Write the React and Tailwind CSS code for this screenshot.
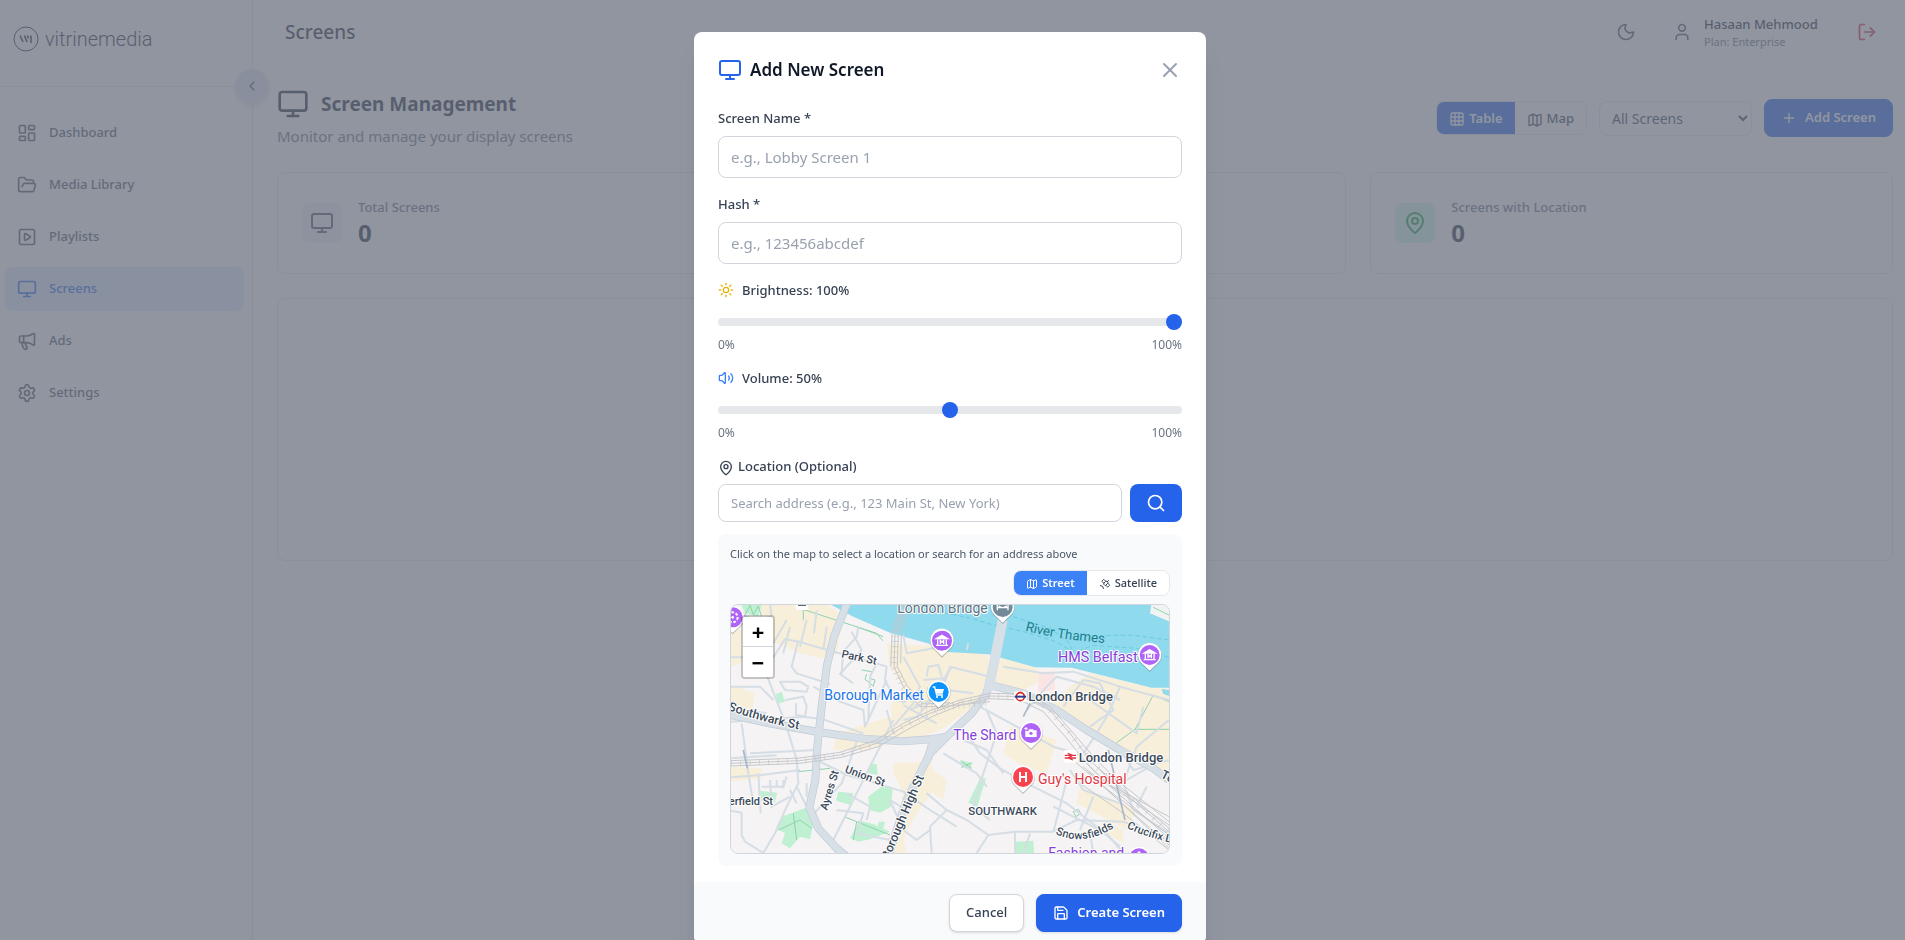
import { useState } from 'react';
import {
  ChevronLeft,
  FolderOpen,
  Grid3x3,
  LayoutDashboard,
  LogOut,
  Map as MapIcon,
  MapPin,
  Megaphone,
  Monitor,
  Moon,
  Plus,
  Save,
  Satellite,
  Search,
  Settings,
  SquarePlay,
  Sun,
  User,
  Volume2,
  X,
} from 'lucide-react';

const NAV = [
  { label: 'Dashboard', icon: LayoutDashboard },
  { label: 'Media Library', icon: FolderOpen },
  { label: 'Playlists', icon: SquarePlay },
  { label: 'Screens', icon: Monitor, active: true },
  { label: 'Ads', icon: Megaphone },
  { label: 'Settings', icon: Settings },
];

function Logo() {
  return (
    <div className="flex items-center gap-[6px] text-gray-800">
      <svg width="26" height="26" viewBox="0 0 26 26" fill="none" stroke="currentColor">
        <circle cx="13" cy="13" r="12" strokeWidth="1" />
        <path d="M7 9.5l3 6.5M11.5 9.5l2.5 6.5M14.5 9.5l1 3M18 9.5V17" strokeWidth="1.6" />
      </svg>
      <span className="font-[Roboto] text-[20px] leading-7 font-light">vitrinemedia</span>
    </div>
  );
}

function Sidebar() {
  return (
    <aside className="relative w-[253px] shrink-0 border-r border-gray-200 bg-white">
      <div className="flex h-[87px] items-center border-b border-gray-200 px-[13px] pb-2">
        <Logo />
      </div>
      <button
        aria-label="Collapse sidebar"
        className="absolute -right-[17px] top-[69px] flex size-[34px] items-center justify-center rounded-full border border-gray-200 bg-slate-200 text-gray-600 shadow-md"
      >
        <ChevronLeft size={16} />
      </button>
      <nav className="flex flex-col gap-2 pt-6 pr-2 pl-[5px]">
        {NAV.map(({ label, icon: Icon, active }) => (
          <a
            key={label}
            href="#"
            className={`flex h-11 items-center gap-3 rounded-lg px-3 text-[13px] font-medium ${
              active ? 'bg-[#e3f0fe] text-[#2563eb]' : 'text-gray-600'
            }`}
          >
            <Icon size={20} />
            {label}
          </a>
        ))}
      </nav>
    </aside>
  );
}

function Header() {
  return (
    <header className="flex h-16 items-center justify-between pr-7 pl-8">
      <h1 className="text-[19px] font-medium text-gray-800">Screens</h1>
      <div className="flex items-center">
        <button aria-label="Dark mode" className="mr-9 text-gray-600">
          <Moon size={20} />
        </button>
        <User size={20} className="mr-3 text-gray-600" />
        <div className="mr-9 min-w-[117px]">
          <p className="text-[13px] leading-5 font-medium text-gray-800">Hasaan Mehmood</p>
          <p className="text-[11px] leading-4 text-gray-500">Plan: Enterprise</p>
        </div>
        <button aria-label="Log out" className="text-[#dc2626]">
          <LogOut size={20} />
        </button>
      </div>
    </header>
  );
}

function StatCard({ label, value, icon: Icon, tone }) {
  return (
    <div className="flex items-center gap-4 rounded-lg border border-gray-200 bg-white p-6">
      <div className={`rounded-lg p-2 ${tone}`}>
        <Icon size={24} />
      </div>
      <div>
        <p className="text-[13px] leading-5 font-medium text-gray-500">{label}</p>
        <p className="text-2xl font-bold text-gray-800">{value}</p>
      </div>
    </div>
  );
}

function ScreensPage() {
  return (
    <main className="flex-1 pt-6 pr-3 pb-6 pl-6">
      <div className="flex items-center justify-between">
        <div>
          <h2 className="flex items-center gap-3 text-[19px] leading-8 font-bold text-gray-800">
            <Monitor size={32} />
            Screen Management
          </h2>
          <p className="mt-1 text-[15px] leading-6 text-gray-500">Monitor and manage your display screens</p>
        </div>
        <div className="flex items-center gap-3">
          <div className="flex overflow-hidden rounded-lg border border-gray-200 text-[13px] leading-5 font-medium">
            <button className="bg-[#2563eb] px-3 py-[6px] font-semibold text-white">
              <Grid3x3 size={16} className="mr-1 inline" />
              Table
            </button>
            <button className="bg-white px-3 py-[6px] text-gray-700">
              <MapIcon size={16} className="mr-1 inline" />
              Map
            </button>
          </div>
          <select
            aria-label="Filter screens"
            className="h-[35px] w-[153px] rounded-lg border border-gray-200 bg-white pl-2 text-[14px] text-gray-700"
          >
            <option>All Screens</option>
          </select>
          <button className="flex h-[38px] items-center gap-2 rounded-lg border border-[#2563eb] bg-[#2563eb] px-4 text-[13px] font-semibold text-white">
            <Plus size={16} />
            Add Screen
          </button>
        </div>
      </div>

      <div className="mt-6 grid grid-cols-3 gap-6">
        <StatCard label="Total Screens" value="0" icon={Monitor} tone="bg-gray-100 text-gray-600" />
        <StatCard label="Online Screens" value="0" icon={Monitor} tone="bg-gray-100 text-gray-600" />
        <StatCard label="Screens with Location" value="0" icon={MapPin} tone="bg-[#d1fae5] text-[#16a34a]" />
      </div>

      <div className="mt-6 h-[263px] rounded-lg border border-gray-200 bg-white" />
    </main>
  );
}

function TextField({ id, label, placeholder }) {
  return (
    <div>
      <label htmlFor={id} className="mb-2 block text-[13px] leading-5 font-medium text-gray-700">
        {label}
      </label>
      <input
        id={id}
        type="text"
        placeholder={placeholder}
        className="block h-[42px] w-full rounded-lg border border-gray-300 px-3 text-[15px] text-gray-900 placeholder:text-gray-400"
      />
    </div>
  );
}

function SliderField({ id, label, icon, value, onChange }) {
  return (
    <div>
      <label
        htmlFor={id}
        className="mb-2 flex items-center gap-2 text-[13px] leading-5 font-medium text-gray-700"
      >
        {icon}
        {label}: {value}%
      </label>
      <div className="flex h-7 items-center">
        <input
          id={id}
          type="range"
          min="0"
          max="100"
          value={value}
          onChange={(e) => onChange(Number(e.target.value))}
          className="h-2 w-full cursor-pointer appearance-none rounded-lg bg-gray-200 [&::-webkit-slider-thumb]:size-4 [&::-webkit-slider-thumb]:appearance-none [&::-webkit-slider-thumb]:rounded-full [&::-webkit-slider-thumb]:bg-[#2563eb]"
        />
      </div>
      <div className="flex justify-between pt-px text-[12px] leading-[15px] text-gray-500">
        <span>0%</span>
        <span>100%</span>
      </div>
    </div>
  );
}

/* Map pin: white drop with a coloured disc, glyph drawn around 0,0 */
function Pin({ x, y, fill, children }) {
  return (
    <g transform={`translate(${x} ${y})`}>
      <path d="M0 51L-22 29A36 36 0 1 1 22 29Z" fill="#5f6b76" opacity="0.45" />
      <path d="M0 47L-22 26A35 35 0 1 1 22 26Z" fill="#fff" />
      <circle r="30" fill={fill} />
      {children}
    </g>
  );
}

function Museum() {
  return (
    <g fill="none" stroke="#fff" strokeWidth="4">
      <path d="M-17 -6L0 -16L17 -6Z" fill="#fff" />
      <path d="M-13 -4V12M13 -4V12M-18 14H18M-5 10V-1L0 5L5 -1V10" />
    </g>
  );
}

const MINOR_ROADS = [
  'M123 412H250L285 357L330 366L420 392L560 430L590 440L585 480L605 520L640 548L680 520',
  'M232 470L290 620L320 720L325 790L290 860L255 940L220 999',
  'M325 360L305 440L320 460L420 492',
  'M370 500L450 545L520 570L525 620L590 480',
  'M123 605L230 598L340 590L400 598L520 640',
  'M123 772L215 765L330 750',
  'M205 760L212 880M123 872L155 878V945L165 965L220 999',
  'M155 610L175 760L190 850',
  'M123 715L260 706M180 700L380 690',
  'M380 720L470 765L560 790L640 815L720 870L800 920',
  'M500 665L470 750L455 790L350 905M610 600L540 740L430 960',
  'M485 335L515 390L450 462L490 490M590 570L610 640',
  'M505 320L500 350L460 395L455 460',
  'M560 430L540 470L535 600',
  'M780 440L760 500L680 590L640 600M780 440L880 465L900 470',
  'M785 440L720 540L660 570',
  'M700 480L760 475L770 510L850 520',
  'M710 470L715 440L745 435L755 470',
  'M830 390L835 370M640 345L650 400L730 385',
  'M640 555L700 590L740 610',
  'M640 410L690 500L670 550L610 620',
  'M650 870L600 840L640 930L680 960L720 930',
  'M710 820L770 870L720 920L725 999',
  'M770 870L830 900L895 945L860 999',
  'M895 945L975 935L1090 935L1160 900L1300 905L1437 960',
  'M975 935V999M1090 935L1110 860L1130 780',
  'M830 640L870 700L930 745L1010 790L1130 850L1220 920L1290 980',
  'M760 700L860 760L890 800M820 660L890 690L940 760',
  'M870 560L980 620L1090 680L1160 700',
  'M890 570L920 640L900 700L880 760L850 860L900 900',
  'M1010 570L1070 500L1100 470L1210 500L1290 540',
  'M1120 560L1180 480L1230 490L1270 570L1200 620',
  'M1290 500L1250 590L1220 640L1180 700',
  'M940 440L1060 460L1150 455L1290 500L1437 540',
  'M1437 600L1340 680L1300 790L1330 870L1437 940',
  'M1290 690L1330 750L1437 720M1370 800L1340 860',
  'M1090 860L1250 940L1300 999M1210 830L1170 930',
  'M1240 780L1310 780L1380 740',
  'M1140 750L1180 810L1290 850M1200 540L1340 640L1360 560',
  'M123 500H210L250 540M160 570L230 580',
  'M240 780L245 860L300 830M150 850H200M215 800L280 800L290 770',
  'M270 485L330 485L355 500L350 515L285 510Z',
  'M285 540L340 530L350 560L345 590L318 585V550',
  'M440 870L520 880L500 940L600 960M470 820L540 860L530 900',
  'M300 810L320 850M320 800L350 860M260 780V800M280 780V805M350 790V830',
  'M240 255L245 290L190 300L150 280M300 320L280 400M350 300L330 380M410 320L400 390',
  'M380 270L372 340M290 300L250 370',
  'M1000 999L1020 940M1200 940L1210 999',
];

const MAJOR_ROADS = [
  'M475 240L432 350L410 440L395 560L382 680L376 780L358 862L385 925L440 985L470 1010',
  'M123 585L250 612L385 636L520 656L640 664L720 658L770 650L845 580L890 520L910 430L938 300',
  'M770 650L720 700L690 760L650 840L620 930L595 1010',
  'M730 660L712 720',
  'M900 495L1000 520L1100 570L1190 630L1290 690L1390 745L1437 780',
];

const PARKS = [
  '258,522 275,515 285,545 262,552',
  '258,925 275,890 352,862 372,900 360,958 330,950 300,985 275,970 285,940',
  '535,830 580,795 608,805 603,860 570,878 538,870',
  '480,955 508,902 550,912 600,935 540,958 505,965',
  '445,815 490,820 482,855 438,842',
  '565,905 585,905 580,925 563,925',
  '835,848 870,775 888,775 862,860',
  '810,720 848,730 840,748 815,742',
  '975,965 1030,962 1032,999 975,999',
  '540,730 560,732 563,765 535,760',
  '210,812 262,818 255,845 215,845',
  '155,255 215,255 205,290 165,280',
];

const BLOCKS = [
  '200,255 415,255 460,290 440,400 420,420 330,400 250,365 235,310',
  '123,320 155,330 155,430 123,440',
  '123,495 195,520 180,600 123,605',
  '123,740 215,745 215,775 123,785',
  '590,370 720,378 895,405 900,500 850,560 760,625 700,650 620,650 600,560 640,500 600,440',
  '440,640 600,590 700,600 690,650 520,690 430,690',
  '610,730 725,725 730,810 680,880 640,960 650,999 585,999 630,870 640,820 610,760',
  '900,405 1035,442 1060,480 1000,510 895,480',
  '1140,500 1200,460 1385,503 1437,530 1437,760 1290,690 1180,610 1080,560',
  '960,620 1100,660 1070,760 1000,740 940,700',
  '1170,800 1340,870 1310,930 1160,850',
  '1240,900 1300,930 1300,970 1250,940',
  '1380,505 1437,505 1437,560 1390,550',
  '700,730 770,780 760,840 700,800',
];

const RAIL = [
  'M123 730L330 722L450 705L560 670L640 620L720 580L810 548L900 528L1000 530L1070 560L1140 640L1200 720L1260 780L1340 850L1437 935',
  'M123 722L330 714L450 697L555 662L640 610L720 572L810 540L900 520L1010 522L1080 560L1150 640L1215 715L1280 780L1437 905',
  'M123 738L330 730L455 712L565 680L650 630L730 588L810 556L900 536L990 540L1060 575L1130 655L1190 730L1250 790L1437 955',
  'M640 255L615 340L612 440L640 500L690 560L760 560L900 545',
  'M648 255L625 340L622 440L650 495L700 552L780 548',
  'M632 255L606 340L602 440M656 255L634 340L632 430',
  'M1150 720L1240 800L1437 975M1160 700L1250 790L1437 890M1170 790L1300 880L1437 990',
  'M1190 750L1437 915M1200 770L1437 945M1180 740L1437 985M1220 740L1437 925',
];

/* Names along the streets and places; halo keeps them legible over roads */
function MapLabels() {
  return (
    <g
      fontFamily="Roboto, sans-serif"
      fontSize="39"
      fontWeight="500"
      fill="#3b4a5a"
      stroke="#fff"
      strokeWidth="6"
      strokeLinejoin="round"
      paintOrder="stroke"
    >
      <defs>
        <path id="thames" d="M1005 332Q1110 360 1260 370" />
        <path id="southwark" d="M113 569Q220 610 390 640" />
        <path id="snows" d="M1096 942Q1190 985 1290 910" />
        <path id="crucifix" d="M1310 924Q1380 957 1480 976" />
      </defs>
      <g fontWeight="400">
        <text x="622" y="280" fontSize="42" fill="#5e7383">London Bridge</text>
        <text fontSize="40" fill="#1a7f8e" stroke="none">
          <textPath href="#thames">River Thames</textPath>
        </text>
        <text x="1104" y="427" fontSize="43" fill="#8440d8">HMS Belfast</text>
        <text x="403" y="539" fontSize="42" fill="#1a73e8">Borough Market</text>
        <text x="790" y="660" fontSize="42" fill="#8440d8">The Shard</text>
        <text x="1044" y="793" fontSize="42" fill="#e0353f">Guy's Hospital</text>
        <text x="1075" y="1014" fontSize="42" fill="#8440d8">Fashion and</text>
      </g>
      <text x="1015" y="544">London Bridge</text>
      <text x="1166" y="725">London Bridge</text>
      <text x="835" y="886" fontSize="34">SOUTHWARK</text>
      <text fontSize="37">
        <textPath href="#southwark">Southwark St</textPath>
      </text>
      <g fontSize="33">
        <text transform="translate(453 412) rotate(12)">Park St</text>
        <text transform="translate(463 757) rotate(20)">Union St</text>
        <text transform="translate(411 872) rotate(-73)">Ayres St</text>
        <text x="249" y="855" textAnchor="end">Copperfield St</text>
        <text transform="translate(1410 772) rotate(26)" fontSize="37">Tooley St</text>
        <text transform="translate(702 772) rotate(-67)" textAnchor="end" fontSize="37">Borough High St</text>
        <text fontSize="34">
          <textPath href="#snows">Snowsfields</textPath>
        </text>
        <text>
          <textPath href="#crucifix">Crucifix Ln</textPath>
        </text>
      </g>
    </g>
  );
}

function StreetMap() {
  return (
    <svg
      className="block h-full w-full"
      viewBox="123 255 1314 744"
      preserveAspectRatio="xMidYMid slice"
      role="img"
      aria-label="Street map of London Bridge and Southwark"
    >
      <rect x="0" y="200" width="1600" height="900" fill="#f5f3f4" />
      {BLOCKS.map((p) => (
        <polygon key={p} points={p} fill="#f8efdb" />
      ))}
      <polygon points="1045,455 1095,455 1095,510 1045,515" fill="#fbe4e4" />
      {PARKS.map((p) => (
        <polygon key={p} points={p} fill="#bff0d2" />
      ))}
      <polygon
        points="415,250 490,290 600,338 720,372 770,396 895,403 1035,442 1145,443 1385,503 1437,503 1437,304 1380,280 1385,250"
        fill="#90daee"
      />
      <polygon points="1415,507 1437,510 1437,528 1420,522" fill="#90daee" />
      <polygon points="1385,250 1437,250 1437,298 1382,276" fill="#f1f3f2" />

      <g fill="none" stroke="#57c3da" strokeWidth="2" strokeDasharray="14 8">
        <path d="M720 270L830 292L900 312L1000 335L1090 362L1150 395" />
        <path d="M970 290L1080 325L1140 370L1152 440M1437 360L1330 346L1240 346" />
        <path d="M1437 412L1340 385L1210 376L1160 395" />
      </g>
      <g fill="none" stroke="#8fd3ae" strokeWidth="3">
        <path d="M330 265L560 340L578 362M340 255V300M500 320L580 350" />
        <path d="M515 450L545 455L540 475L555 480L550 498L525 478L530 462" />
        <path d="M1437 545L1390 525L1335 628L1280 668M1335 628H1437" />
        <path d="M325 755L420 745M462 890L500 905L490 960M500 905L600 945" />
        <path d="M265 930L330 900L365 925M310 880L320 960M1390 262L1437 285" />
        <path d="M165 285L180 255L190 285L205 258L215 290M815 725L845 745M815 742L845 728" />
        <path d="M1150 875L1165 868L1172 880L1158 890Z" />
      </g>

      <g fill="none" stroke="#d5dde5" strokeWidth="6" strokeLinejoin="round">
        {MINOR_ROADS.map((d) => (
          <path key={d} d={d} />
        ))}
      </g>
      <g fill="none" stroke="#c2ccd6" strokeWidth="24" strokeLinejoin="round">
        {MAJOR_ROADS.map((d) => (
          <path key={d} d={d} />
        ))}
      </g>
      <g fill="none" stroke="#d7dfe7" strokeWidth="20" strokeLinejoin="round">
        {MAJOR_ROADS.map((d) => (
          <path key={d} d={d} />
        ))}
      </g>
      {/* London Bridge itself is wider than the roads that meet it */}
      <path d="M938 300L912 430L895 510" fill="none" stroke="#d7dfe7" strokeWidth="30" />
      <g fill="none" stroke="#c6c8cb" strokeWidth="3">
        {RAIL.map((d) => (
          <path key={d} d={d} />
        ))}
        <path d={RAIL[0]} strokeWidth="16" strokeDasharray="2 26" />
        <path d={RAIL[3]} strokeWidth="22" strokeDasharray="2 14" />
      </g>
      <path d="M160 690L172 745M1255 690L1305 900M1000 590L1020 550" fill="none" stroke="#a9b8c8" strokeWidth="5" />

      <MapLabels />

      <rect x="317" y="240" width="38" height="30" rx="5" fill="#fff" />
      <path d="M324 256H348" stroke="#5b6570" strokeWidth="4" />

      <g>
        <rect x="972" y="514" width="38" height="32" rx="8" fill="#fff" />
        <circle cx="991" cy="530" r="12" fill="#fff" stroke="#dc241f" strokeWidth="5" />
        <path d="M974 530H1008" stroke="#2a3d8f" strokeWidth="6" />
      </g>
      <g>
        <rect x="1121" y="690" width="40" height="38" rx="7" fill="#fff" />
        <path d="M1124 706H1158M1124 714H1158M1133 700L1148 706L1134 714L1149 720" fill="none" stroke="#e0353f" strokeWidth="4" />
      </g>

      <Pin x="128" y="292" fill="#b064f7">
        <circle r="15" fill="none" stroke="#fff" strokeWidth="6" strokeDasharray="8 5" />
        <circle r="4" fill="#fff" />
      </Pin>
      <Pin x="938" y="261" fill="#738a98">
        <path d="M-16 10V-6M16 10V-6M-18 2H18M-12 -4Q0 8 12 -4" fill="none" stroke="#fff" strokeWidth="4" />
      </Pin>
      <Pin x="756" y="362" fill="#b064f7">
        <Museum />
      </Pin>
      <Pin x="1379" y="405" fill="#b064f7">
        <Museum />
      </Pin>
      <Pin x="746" y="516" fill="#0b93fb">
        <path d="M-10 -9H16L12 5H-7Z" fill="#fff" />
        <path d="M-18 -15H-12L-6 9H13" fill="none" stroke="#fff" strokeWidth="4" />
        <circle cx="-5" cy="15" r="3" fill="#fff" />
        <circle cx="10" cy="15" r="3" fill="#fff" />
      </Pin>
      <Pin x="1023" y="639" fill="#b064f7">
        <path d="M-17 -6H-7V-11H7V-8H17V12H-17Z" fill="#fff" />
        <circle cy="1" r="5" fill="#b064f7" />
        <path d="M-15 -18V-8M-20 -13H-10" stroke="#fff" strokeWidth="3" />
      </Pin>
      <Pin x="999" y="771" fill="#f9434f">
        <path d="M-9 -15V15M9 -15V15M-9 0H9" stroke="#fff" strokeWidth="6" />
      </Pin>
      <Pin x="1347" y="1015" fill="#b064f7">
        <circle cy="-16" r="5" fill="#fff" />
      </Pin>
    </svg>
  );
}

function LocationPicker() {
  return (
    <div>
      <label htmlFor="address" className="mb-2 block text-[13px] leading-5 font-medium text-gray-700">
        <MapPin size={16} className="mr-1 inline" />
        Location (Optional)
      </label>
      <div className="flex gap-2">
        <input
          id="address"
          type="text"
          placeholder="Search address (e.g., 123 Main St, New York)"
          className="h-[38px] min-w-0 flex-1 rounded-lg border border-gray-300 px-3 text-[13px] placeholder:text-gray-400"
        />
        <button type="button" aria-label="Search" className="rounded-lg bg-[#2563eb] px-4 text-white">
          <Search size={20} />
        </button>
      </div>

      <div className="mt-3 rounded-lg bg-gray-50 p-3">
        <p className="text-[11px] leading-4 text-gray-600">
          Click on the map to select a location or search for an address above
        </p>
        <div className="mt-2 flex justify-end">
          <div className="flex overflow-hidden rounded-lg border border-gray-200 text-[11px] leading-4 font-medium">
            <button type="button" className="bg-[#3b82f6] px-3 py-1 font-semibold text-white">
              <MapIcon size={12} className="mr-1 inline" />
              Street
            </button>
            <button type="button" className="bg-white px-3 py-1 text-gray-700">
              <Satellite size={12} className="mr-1 inline" />
              Satellite
            </button>
          </div>
        </div>
        <div className="relative mt-2 h-[250px] overflow-hidden rounded-lg border border-gray-300">
          <StreetMap />
          <div className="absolute top-[10px] left-[10px] flex w-[34px] flex-col rounded-[4px] border-2 border-black/20 bg-clip-padding text-[22px] font-bold text-black">
            <button type="button" aria-label="Zoom in" className="flex h-[30px] items-center justify-center rounded-t-[2px] border-b border-gray-300 bg-white">
              +
            </button>
            <button type="button" aria-label="Zoom out" className="flex h-[30px] items-center justify-center rounded-b-[2px] bg-white">
              −
            </button>
          </div>
        </div>
      </div>
    </div>
  );
}

function AddScreenModal() {
  const [brightness, setBrightness] = useState(100);
  const [volume, setVolume] = useState(50);

  return (
    <div className="fixed inset-0 flex items-start justify-center overflow-hidden bg-[#6b7280]/75 py-8 pr-[5px]">
      <form
        role="dialog"
        aria-labelledby="modal-title"
        className="w-full max-w-lg shrink-0 overflow-hidden rounded-lg bg-white shadow-xl"
      >
        <div className="px-6 pt-6 pb-4">
          <div className="mb-6 flex h-7 items-center justify-between">
            <h3 id="modal-title" className="flex items-center gap-2 text-[17px] font-semibold text-gray-900">
              <Monitor size={24} className="text-[#2563eb]" />
              Add New Screen
            </h3>
            <button type="button" aria-label="Close" className="text-gray-400">
              <X size={24} />
            </button>
          </div>
          <div className="flex flex-col gap-4">
            <TextField id="name" label="Screen Name *" placeholder="e.g., Lobby Screen 1" />
            <TextField id="hash" label="Hash *" placeholder="e.g., 123456abcdef" />
            <SliderField
              id="brightness"
              label="Brightness"
              icon={<Sun size={16} className="text-[#eab308]" />}
              value={brightness}
              onChange={setBrightness}
            />
            <SliderField
              id="volume"
              label="Volume"
              icon={<Volume2 size={16} className="text-[#3b82f6]" />}
              value={volume}
              onChange={setVolume}
            />
            <LocationPicker />
          </div>
        </div>
        <div className="flex justify-end gap-3 bg-gray-50 px-6 py-3 text-[13px] font-medium">
          <button type="button" className="h-[38px] rounded-lg border border-gray-300 bg-white px-4 text-gray-700 shadow-sm">
            Cancel
          </button>
          <button type="button" className="flex h-[38px] items-center gap-2 rounded-lg border border-[#2563eb] bg-[#2563eb] px-4 font-semibold text-white shadow-sm">
            <Save size={16} />
            Create Screen
          </button>
        </div>
      </form>
    </div>
  );
}

export default function App() {
  return (
    <div className="font-['Noto_Sans','Open_Sans',sans-serif] antialiased">
      <div className="flex min-h-screen bg-white">
        <Sidebar />
        <div className="flex min-w-0 flex-1 flex-col">
          <Header />
          <ScreensPage />
        </div>
      </div>
      <AddScreenModal />
    </div>
  );
}
